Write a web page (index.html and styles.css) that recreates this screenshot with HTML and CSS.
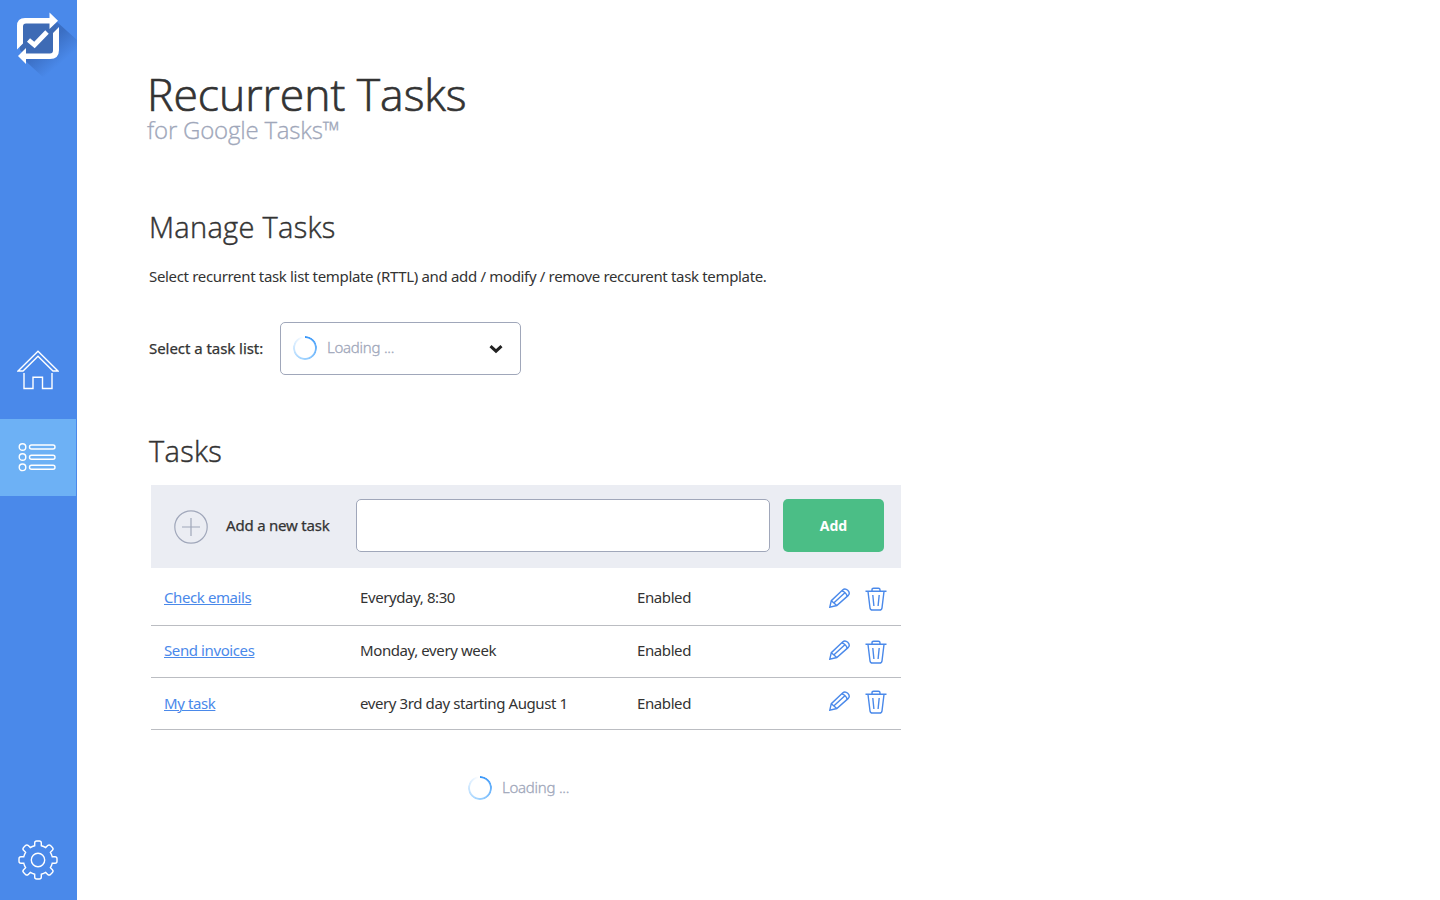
FILE: index.html
```html
<!DOCTYPE html>
<html lang="en">
<head>
<meta charset="utf-8">
<title>Recurrent Tasks</title>
<link rel="stylesheet" href="styles.css">
</head>
<body>
<svg class="defs" aria-hidden="true">
  <symbol id="pencil" viewBox="0 0 21 20">
    <path d="M.8 19.200 2.300 12.700 13.600 2C16.800-1 22.200 4 19.300 7.400L7.800 17.500ZM2.300 12.700 7.800 17.500M5 14.700 15.600 4.900M12.400 3.100C14.500 2.700 18.300 6 18 8.500"/>
  </symbol>
  <symbol id="trash" viewBox="0 0 22 24">
    <path d="M.5 4.300H21.500M7 4V2.800Q7 1.200 8.600 1.200H13.400Q15 1.200 15 2.800V4M3 4.500 5 20.800Q5.300 23 7.300 23H14.700Q16.700 23 17 20.800L19 4.500M7.800 8 8.900 19M14.200 8 13.100 19"/>
  </symbol>
</svg>
<div class="app">
  <nav class="sidebar">
    <svg class="logo" width="77" height="90" viewBox="0 0 77 90">
      <defs><linearGradient id="shade" x1="38" y1="38" x2="60" y2="64" gradientUnits="userSpaceOnUse"><stop offset=".3" stop-color="#3768ba"/><stop offset="1" stop-color="#4a89ea"/></linearGradient></defs>
      <path d="M57 22 77 40V90H57L19 55Z" fill="url(#shade)" opacity=".8"/>
      <path d="M20 21H49L56 25V56H26L20 50Z" fill="#3e6bb5"/>
      <path fill="#fff" d="M17 49.500V26Q17 18 25 18H49.500V12.500L58 20.700 49.500 29V23.500H26Q23 23.500 23 26.500V43.500ZM59 27V50Q59 59 50 59H26V64L18 56 26 48V53.500H50Q53 53.500 53 50.500V33Z"/>
      <path d="m28.500 40 6 5 12.500-13" fill="none" stroke="#fff" stroke-width="4.800"/>
    </svg>
    <a class="nav-item home"><svg width="42" height="40" viewBox="0 0 42 40"><path d="M1 21 21 1.200 41 21H36L21 6.300 6 21ZM7 23V38.500H16V27.300H25.500V38.500H35V23"/></svg></a>
    <a class="nav-item active"><svg width="38" height="30" viewBox="0 0 38 30"><circle cx="4.500" cy="5" r="3.300"/><circle cx="4.500" cy="15" r="3.300"/><circle cx="4.500" cy="25.300" r="3.300"/><rect x="11.500" y="3" width="25.500" height="4" rx="2"/><rect x="11.500" y="13.300" width="25.500" height="4" rx="2"/><rect x="11.500" y="23.300" width="25.500" height="4" rx="2"/></svg></a>
    <a class="nav-item settings"><svg width="40" height="40" viewBox="-20 -20 40 40"><circle r="6.700"/><path d="M-3.300-14.200V-17Q-3.300-19-1.300-19H1.300Q3.300-19 3.300-17V-14.200Q5.800-13.600 7.700-12.400L9.700-14.400Q11.100-15.800 12.500-14.400L14.400-12.500Q15.800-11.100 14.400-9.700L12.400-7.700Q13.600-5.800 14.200-3.300H17Q19-3.300 19-1.300V1.300Q19 3.300 17 3.300H14.200Q13.600 5.800 12.400 7.700L14.400 9.700Q15.800 11.100 14.400 12.500L12.500 14.400Q11.100 15.800 9.700 14.400L7.700 12.400Q5.800 13.600 3.300 14.200V17Q3.300 19 1.300 19H-1.300Q-3.300 19-3.300 17V14.200Q-5.800 13.600-7.700 12.400L-9.700 14.400Q-11.100 15.800-12.500 14.400L-14.400 12.500Q-15.800 11.100-14.400 9.700L-12.400 7.700Q-13.600 5.800-14.200 3.300H-17Q-19 3.300-19 1.300V-1.300Q-19-3.300-17-3.300H-14.200Q-13.600-5.800-12.400-7.700L-14.400-9.700Q-15.800-11.100-14.400-12.500L-12.500-14.400Q-11.100-15.800-9.700-14.400L-7.700-12.400Q-5.800-13.600-3.300-14.200Z"/></svg></a>
  </nav>
  <main class="content">
    <header>
      <h1 class="title">Recurrent Tasks</h1>
      <p class="subtitle">for Google Tasks™</p>
    </header>
    <h2 class="heading">Manage Tasks</h2>
    <p class="intro">Select recurrent task list template (RTTL) and add / modify / remove reccurent task template.</p>
    <div class="picker">
      <span class="picker-label">Select a task list:</span>
      <div class="select">
        <i class="spinner"></i><span class="loading-text">Loading ...</span>
        <svg class="chevron" width="14" height="10" viewBox="0 0 14 10"><path d="m1.500 2.200 5.500 5 5.500-5"/></svg>
      </div>
    </div>
    <h2 class="heading tasks-heading">Tasks</h2>
    <section class="tasks">
      <div class="add-bar">
        <svg class="plus" width="34" height="34" viewBox="0 0 34 34"><circle cx="17" cy="17" r="16.200"/><path d="M8 17H26M17 8V26"/></svg>
        <span class="add-label">Add a new task</span>
        <input class="add-input" type="text" aria-label="Add a new task">
        <button class="add-button">Add</button>
      </div>
      <div class="row first">
        <a class="name">Check emails</a><span>Everyday, 8:30</span><span>Enabled</span>
        <span class="actions"><svg class="pencil"><use href="#pencil"/></svg><svg class="trash"><use href="#trash"/></svg></span>
      </div>
      <div class="row second">
        <a class="name">Send invoices</a><span>Monday, every week</span><span>Enabled</span>
        <span class="actions"><svg class="pencil"><use href="#pencil"/></svg><svg class="trash"><use href="#trash"/></svg></span>
      </div>
      <div class="row last">
        <a class="name">My task</a><span>every 3rd day starting August 1</span><span>Enabled</span>
        <span class="actions"><svg class="pencil"><use href="#pencil"/></svg><svg class="trash"><use href="#trash"/></svg></span>
      </div>
      <div class="loading"><i class="spinner"></i><span class="loading-text">Loading ...</span></div>
    </section>
  </main>
</div>
</body>
</html>
```
FILE: styles.css
```css
* { box-sizing: border-box; }
body { margin: 0; background: #fff; color: #333; font: 400 15px/20px "Noto Sans", "Open Sans", sans-serif; letter-spacing: -.4px; }
h1, h2, p { margin: 0; white-space: nowrap; }
h1, h2, .subtitle { font-family: "Open Sans", "Noto Sans", sans-serif; font-weight: 300; }
svg { display: block; flex: none; }
.defs { position: absolute; width: 0; height: 0; }
.app { display: flex; height: 900px; }
.sidebar { width: 77px; background: #4a89ea; display: flex; flex-direction: column; flex: none; }
.nav-item { display: flex; align-items: center; justify-content: center; height: 77px; padding-right: 2px; }
.nav-item svg { fill: none; stroke: #fff; stroke-width: 1.400; }
.home { margin-top: 242px; height: 87px; align-items: flex-start; padding-top: 18px; }
.active { background: #6db1f5; width: 76px; padding-bottom: 2px; }
.settings { margin-top: auto; height: 80px; }
.content { width: 824px; padding: 71px 0 0 71px; flex: none; }
.title { font-size: 44.500px; line-height: 46px; letter-spacing: -.03px; margin-left: -1px; -webkit-text-stroke: .7px currentColor; }
.subtitle { font-size: 24px; line-height: 26px; color: #a0a7ba; letter-spacing: -.2px; margin-left: -1px; -webkit-text-stroke: .3px currentColor; }
.heading { font-size: 29px; line-height: 36px; margin-top: 66px; padding-left: 1px; letter-spacing: .3px; -webkit-text-stroke: .45px currentColor; }
.intro { margin-top: 21px; padding-left: 1px; letter-spacing: -.335px; }
.picker { display: flex; align-items: center; height: 53px; margin-top: 36px; padding-left: 1px; }
.picker-label { width: 131px; letter-spacing: -.05px; padding-bottom: 1px; -webkit-text-stroke: .25px currentColor; }
.select { width: 241px; height: 53px; border: 1px solid #a0a7ba; border-radius: 5px; display: flex; align-items: center; padding: 0 17px 0 12px; }
.spinner { display: block; width: 24px; height: 24px; border-radius: 50%; background: conic-gradient(#3594f8, #9bd0fe 50%, #e9f4ff 90%, #fff 98%); mask: radial-gradient(circle, transparent 9.500px, #000 10.500px); }
.select .spinner { margin-bottom: 1px; }
.loading-text { color: #a0a7ba; margin-left: 10px; font-weight: 300; letter-spacing: -.25px; padding-bottom: 2px; -webkit-text-stroke: .3px currentColor; }
.select .loading-text { padding-bottom: 3px; }
.chevron { margin-left: auto; fill: none; stroke: #222; stroke-width: 3; }
.tasks-heading { margin-top: 58px; }
.tasks { width: 750px; margin: 16px 0 0 3px; }
.add-bar { height: 83px; background: #ebedf3; display: flex; align-items: center; padding: 0 17px 2px 23px; }
.plus { fill: none; stroke: #a0a7ba; stroke-width: 1.200; margin-top: 2px; }
.add-label { width: 130px; margin-left: 18px; letter-spacing: -.2px; padding-bottom: 2px; -webkit-text-stroke: .25px currentColor; }
.add-input { width: 414px; height: 53px; border: 1px solid #a0a7ba; border-radius: 5px; background: #fff; padding: 0 12px; font: inherit; }
.add-button { width: 101px; height: 53px; margin-left: auto; border: 0; border-radius: 5px; background: #4bbe86; color: #fff; font: 700 14px/20px "Noto Sans", sans-serif; }
.row { display: grid; grid-template-columns: 196px 277px 192px 1fr; align-items: center; height: 52px; border-bottom: 1px solid #bbbdc2; padding: 0 0 2px 13px; white-space: nowrap; }
.first { height: 58px; padding-top: 3px; }
.second { padding-bottom: 3px; }
.last { padding-bottom: 1px; }
.name { color: #4a89ea; text-decoration: underline; text-decoration-thickness: 1px; text-underline-offset: 1px; }
.actions { display: flex; align-items: center; gap: 15px; }
.actions svg { fill: none; stroke: #4a89ea; stroke-width: 1.400; }
.pencil { width: 21px; height: 20px; margin-bottom: 2px; }
.trash { width: 22px; height: 24px; }
.first .actions, .second .actions { padding-top: 4px; }
.second .pencil { margin-bottom: 4px; }
.last .actions { padding-bottom: 2px; }
.loading { display: flex; align-items: center; padding: 46px 0 0 317px; }
```
